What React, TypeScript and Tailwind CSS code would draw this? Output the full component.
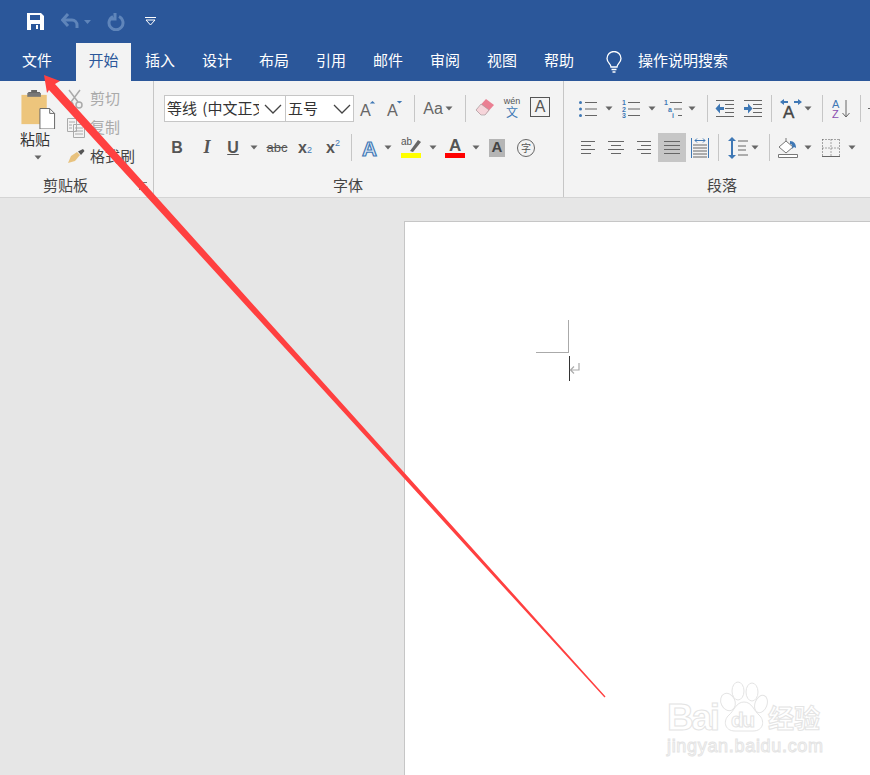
import type { ReactNode } from "react";

const cjk = "font-['Microsoft_YaHei','Noto_Sans_CJK_SC','Noto_Sans',sans-serif]";

const tabs = ["插入", "设计", "布局", "引用", "邮件", "审阅", "视图", "帮助"];

function Caret({ className = "" }: { className?: string }) {
  return (
    <div className={`flex w-[8px] shrink-0 justify-center ${className}`}>
      <svg width="8" height="5" viewBox="0 0 8 5">
        <path d="M.5 .5h7L4 4.500z" fill="#666" />
      </svg>
    </div>
  );
}

function Sep({ className = "" }: { className?: string }) {
  return <div className={`h-[27px] w-px shrink-0 bg-[#c6c6c6] ${className}`} />;
}

function Cell({ className = "", children }: { className?: string; children: ReactNode }) {
  return <div className={`flex shrink-0 items-center justify-center ${className}`}>{children}</div>;
}

function Chevron() {
  return (
    <svg width="18" height="10" viewBox="0 0 18 10" className="shrink-0">
      <path d="M1 1l8 8 8-8" fill="none" stroke="#444" strokeWidth="1.3" />
    </svg>
  );
}

function Lines({ w, rows }: { w: number; rows: [number, number][] }) {
  const h = rows.length * 4 + 1;
  return (
    <svg width={w} height={h} viewBox={`0 0 ${w} ${h}`}>
      {rows.map(([a, b], i) => (
        <path key={i} d={`M${a} ${i * 4 + 2.5}H${b}`} stroke="#666" strokeWidth="1" />
      ))}
    </svg>
  );
}

function ListIcon({ kind }: { kind: "bullet" | "num" | "multi" }) {
  const marks = kind === "num" ? ["1", "2", "3"] : ["1", "a", "i"];
  return (
    <svg width="20" height="18" viewBox="0 0 20 18">
      {[2.5, 9, 15.5].map((y, i) => {
        const x = kind === "multi" ? 1 + i * 4 : 1;
        return (
          <g key={y}>
            {kind === "bullet" ? (
              <circle cx="2.500" cy={y} r="1.500" fill="#3f78b5" />
            ) : (
              <text x={x} y={y + 2.5} fontSize="7" fontWeight="bold" fill="#3f78b5" fontFamily="Liberation Sans">
                {marks[i]}
              </text>
            )}
            <path d={`M${kind === "multi" ? x + 6 : 7} ${y}H19`} stroke="#666" strokeWidth="1" />
          </g>
        );
      })}
    </svg>
  );
}

function IndentIcon({ flip }: { flip?: boolean }) {
  return (
    <svg width="20" height="17" viewBox="0 0 20 17">
      <path d="M1 .5h18M10 4.500h9M10 8.500h9M10 12.500h9M1 16.500h18" stroke="#666" strokeWidth="1" />
      <path d={flip ? "M1 7h4V3.500l4.500 5L5 13.500V10H1z" : "M9 7H5V3.500L.5 8.500 5 13.500V10h4z"} fill="#3f78b5" />
    </svg>
  );
}

export default function App() {
  return (
    <div className={`relative flex h-[775px] w-[870px] flex-col overflow-hidden bg-[#e6e6e6] ${cjk}`}>
      {/* Title bar */}
      <div className="flex h-[43px] shrink-0 items-center bg-[#2b579a] pl-[27px]">
        <svg width="17" height="17" viewBox="0 0 17 17">
          <path d="M0 0h14l3 3v14H0z" fill="#fff" />
          <path d="M3 2h10v5H3z" fill="#2b579a" />
          <path d="M4 11h9v6H4z" fill="#2b579a" />
          <path d="M9 12h2v4H9z" fill="#fff" />
        </svg>
        <svg width="20" height="17" viewBox="0 0 20 17" className="ml-[17px]">
          <path d="M2 7h9a5 5 0 0 1 5 5v3" fill="none" stroke="#5f85ba" strokeWidth="3" />
          <path d="M7 1L1.500 7 7 13" fill="none" stroke="#5f85ba" strokeWidth="3" />
        </svg>
        <svg width="7" height="4" viewBox="0 0 7 4" className="ml-[3px]">
          <path d="M0 0h7L3.500 4z" fill="#5f85ba" />
        </svg>
        <svg width="18" height="18" viewBox="0 0 18 18" className="ml-[16px]">
          <path d="M6 3.500a7 7 0 1 0 6 0" fill="none" stroke="#5f85ba" strokeWidth="3" />
          <path d="M5 1v6h-5" fill="none" stroke="#5f85ba" strokeWidth="3" transform="translate(3 -1)" />
        </svg>
        <svg width="11" height="9" viewBox="0 0 11 9" className="ml-[20px]">
          <path d="M0 .5h11" stroke="#fff" />
          <path d="M1 3l4.500 5L10 3z" fill="none" stroke="#fff" />
        </svg>
      </div>

      {/* Tabs */}
      <div className="flex h-[38px] shrink-0 items-center bg-[#2b579a] text-[15px] text-white">
        <span className="-mt-[4px] ml-[22px] w-[54px]">文件</span>
        <div className="flex h-full w-[55px] items-center justify-center bg-[#f3f3f3] pb-[4px] text-[#2b579a]">开始</div>
        <div className="-mt-[4px] ml-[14px] flex gap-[27px]">
          {tabs.map((t) => (
            <span key={t} className="w-[30px] whitespace-nowrap">
              {t}
            </span>
          ))}
        </div>
        <svg width="18" height="22" viewBox="0 0 18 22" className="ml-[31px]">
          <path
            d="M6 16c0-3-4-4.500-4-8.500a7 7 0 0 1 14 0c0 4-4 5.500-4 8.500z"
            fill="none"
            stroke="#fff"
            strokeWidth="1.3"
          />
          <path d="M6.500 18.500h5M7.500 21h3" stroke="#fff" strokeWidth="1.3" />
        </svg>
        <span className="-mt-[4px] ml-[15px] whitespace-nowrap">操作说明搜索</span>
      </div>

      {/* Ribbon */}
      <div className="flex h-[117px] shrink-0 border-b border-[#d4d4d4] bg-[#f3f3f3] text-[#444]">
        {/* Clipboard */}
        <div className="flex w-[154px] shrink-0 flex-col border-r border-[#c6c6c6]">
          <div className="flex h-[94px]">
            <div className="flex w-[67px] shrink-0 flex-col items-center pl-[6px] pt-[9px]">
              <svg width="36" height="39" viewBox="0 0 36 40" className="ml-[3px]">
                <path d="M1 5h26v30H1z" fill="#edc57c" />
                <path d="M8 5h12V2h-3V0h-6v2H8z" fill="#666" />
                <path d="M7 3h14v4H7z" fill="#777" />
                <path d="M20 19h10l5 5v16H20z" fill="#fff" stroke="#666" />
                <path d="M30 19v5h5" fill="none" stroke="#666" />
              </svg>
              <span className="-ml-[3px] text-[15px] leading-[20px] text-[#333]">粘贴</span>
              <Caret className="ml-[2px] mt-[6px]" />
            </div>
            <div className="flex flex-col pt-[3px] text-[15px]">
              <div className="flex h-[29px] items-center text-[#aaa]">
                <svg width="18" height="20" viewBox="0 0 18 20" className="ml-[-1px] shrink-0">
                  <path d="M3 1l9 12M14 1L5 13" stroke="#aaa" strokeWidth="1.500" />
                  <circle cx="4" cy="16" r="3" fill="none" stroke="#aaa" strokeWidth="1.500" />
                  <circle cx="13" cy="16" r="3" fill="none" stroke="#aaa" strokeWidth="1.500" />
                </svg>
                <span className="ml-[6px]">剪切</span>
              </div>
              <div className="flex h-[29px] items-center text-[#aaa]">
                <svg width="18" height="20" viewBox="0 0 18 20" className="shrink-0">
                  <path d="M.5.500h9v13h-9zM6.500 6.500h11v13h-11z" fill="#f3f3f3" stroke="#aaa" />
                  <path d="M2 4h6M2 7h3M2 10h3M8 10h8M8 13h8M8 16h8" stroke="#aaa" />
                </svg>
                <span className="ml-[5px]">复制</span>
              </div>
              <div className="flex h-[29px] items-center text-[#444]">
                <svg width="18" height="16" viewBox="0 0 18 16" className="shrink-0">
                  <path d="M10 3l3 3-5 6-7 2 3-7z" fill="#e8c27e" />
                  <path d="M11 2.500L16 0l1.500 2L14 6z" fill="#555" />
                </svg>
                <span className="ml-[5px]">格式刷</span>
              </div>
            </div>
          </div>
          <div className="relative flex h-[21px] items-center pl-[43px] text-[15px]">
            剪贴板
            <svg width="9" height="9" viewBox="0 0 9 9" className="absolute left-[139px] top-[7px]">
              <path d="M.5 8V.5H8M3 3l5 5M8 4.500V8H4.500" fill="none" stroke="#777" />
            </svg>
          </div>
        </div>

        {/* Font */}
        <div className="flex w-[410px] shrink-0 flex-col border-r border-[#c6c6c6] pl-[10px]">
          <div className="mt-[14px] flex h-[27px] items-center">
            <div className="flex h-[27px] w-[122px] shrink-0 items-center overflow-hidden border border-[#c6c6c6] bg-white text-[15px] text-[#333]">
              <span className="ml-[2px] w-[92px] shrink-0 overflow-hidden whitespace-nowrap [word-spacing:2px]">等线 (中文正文)</span>
              <span className="w-[5px] shrink-0" />
              <Chevron />
            </div>
            <div className="-ml-px flex h-[27px] w-[69px] shrink-0 items-center border border-[#c6c6c6] bg-white text-[15px] text-[#333]">
              <span className="ml-[2px] w-[45px] shrink-0">五号</span>
              <Chevron />
            </div>
            <Cell className="ml-[5px] w-[18px]">
              <svg width="20" height="20" viewBox="0 0 20 20">
                <text x="1" y="18" fontSize="18" fill="#666" fontFamily="Liberation Sans">A</text>
                <path d="M12 4l3-3 3 3z" fill="#3f78b5" />
              </svg>
            </Cell>
            <Cell className="ml-[9px] w-[18px]">
              <svg width="20" height="20" viewBox="0 0 20 20">
                <text x="1" y="18" fontSize="18" fill="#666" fontFamily="Liberation Sans">A</text>
                <path d="M12 1l3 3 3-3z" fill="#3f78b5" />
              </svg>
            </Cell>
            <Sep className="ml-[10px]" />
            <Cell className="ml-[8px] w-[20px] text-[16px] text-[#666] font-['Liberation_Sans',sans-serif]">Aa</Cell>
            <Caret className="ml-[2px]" />
            <Sep className="ml-[12px]" />
            <Cell className="-mt-[3px] ml-[9px] w-[20px]">
              <svg width="20" height="20" viewBox="0 0 20 20">
                <path d="M1 13L11 2l8 6-9 10H6z" fill="#ea7f92" />
                <path d="M1 13l5-6 8 6-4 5H6z" fill="#f6d5da" stroke="#999" strokeWidth=".6" />
              </svg>
            </Cell>
            <Cell className="-mt-[2px] ml-[8px] w-[18px]">
              <div className="flex flex-col items-center leading-none">
                <span className="text-[9px] text-[#555] font-['Liberation_Sans',sans-serif]">wén</span>
                <span className="text-[12px] text-[#3f78b5]">文</span>
              </div>
            </Cell>
            <Cell className="-mt-[3px] ml-[9px] h-[20px] w-[20px] border border-[#555] text-[16px] text-[#555] font-['Liberation_Sans',sans-serif]">
              A
            </Cell>
          </div>
          <div className="mt-[11px] flex h-[29px] items-center font-['Liberation_Sans',sans-serif] text-[#555]">
            <Cell className="ml-[7px] w-[12px] text-[16px] font-bold">B</Cell>
            <Cell className="ml-[18px] w-[12px] font-['Liberation_Serif',serif] text-[18px] font-bold italic">I</Cell>
            <Cell className="ml-[14px] w-[12px] text-[16px] font-bold underline">U</Cell>
            <Caret className="ml-[11px]" />
            <Cell className="ml-[9px] w-[20px] text-[13px] line-through">abc</Cell>
            <Cell className="ml-[10px] w-[16px] text-[16px] font-bold">
              x<span className="mt-[6px] text-[9px] font-normal text-[#3f78b5]">2</span>
            </Cell>
            <Cell className="ml-[12px] w-[16px] text-[16px] font-bold">
              x<span className="-mt-[7px] text-[9px] font-normal text-[#3f78b5]">2</span>
            </Cell>
            <Sep className="ml-[10px]" />
            <Cell className="ml-[9px] w-[18px]">
              <svg width="20" height="22" viewBox="0 0 20 22">
                <text x="1" y="20" fontSize="23" fontWeight="bold" fill="#dce8f5" stroke="#3f78b5" strokeWidth="1.300" fontFamily="Liberation Sans">A</text>
              </svg>
            </Cell>
            <Caret className="ml-[5px]" />
            <Cell className="ml-[9px] w-[20px]">
              <svg width="20" height="22" viewBox="0 0 20 22">
                <text x="0" y="8" fontSize="10" fill="#555" fontFamily="Liberation Sans">ab</text>
                <path d="M9 14l8-11 3 2-8 10z" fill="#666" />
                <path d="M0 16h20v5H0z" fill="#ffff00" />
              </svg>
            </Cell>
            <Caret className="ml-[8px]" />
            <Cell className="ml-[8px] w-[20px]">
              <svg width="20" height="22" viewBox="0 0 20 22">
                <text x="4" y="14" fontSize="17" fontWeight="bold" fill="#555" fontFamily="Liberation Sans">A</text>
                <path d="M0 16h20v5H0z" fill="#f00" />
              </svg>
            </Cell>
            <Caret className="ml-[7px]" />
            <Cell className="ml-[9px] h-[18px] w-[16px] bg-[#b5b5b5] text-[15px] font-bold text-[#444]">A</Cell>
            <Cell className={`ml-[12px] h-[18px] w-[18px] rounded-full border border-[#666] text-[10px] text-[#555] ${cjk}`}>字</Cell>
          </div>
          <div className="mt-[13px] flex h-[21px] items-center pl-[169px] text-[15px]">字体</div>
        </div>

        {/* Paragraph */}
        <div className="flex min-w-0 flex-1 flex-col overflow-hidden pl-[10px]">
          <div className="mt-[14px] flex h-[27px] items-center">
            <Cell className="ml-[4px] w-[20px]"><ListIcon kind="bullet" /></Cell>
            <Caret className="ml-[7px]" />
            <Cell className="ml-[8px] w-[20px]"><ListIcon kind="num" /></Cell>
            <Caret className="ml-[7px]" />
            <Cell className="ml-[7px] w-[20px]"><ListIcon kind="multi" /></Cell>
            <Caret className="ml-[5px]" />
            <Sep className="ml-[11px]" />
            <Cell className="ml-[7px] w-[20px]"><IndentIcon /></Cell>
            <Cell className="ml-[8px] w-[20px]"><IndentIcon flip /></Cell>
            <Sep className="ml-[8px]" />
            <Cell className="ml-[7px] w-[24px]">
              <svg width="24" height="20" viewBox="0 0 24 20">
                <path d="M1 3l4-3v2h4v2H5v2zM23 3l-4-3v2h-4v2h4v2z" fill="#3f78b5" />
                <text x="4" y="19" fontSize="17" fill="#444" stroke="#444" strokeWidth=".4" fontFamily="Liberation Sans">A</text>
              </svg>
            </Cell>
            <Caret className="ml-[1px]" />
            <Sep className="ml-[10px]" />
            <Cell className="ml-[9px] w-[20px]">
              <svg width="20" height="20" viewBox="0 0 20 20">
                <text x="0" y="9" fontSize="11" fill="#3f78b5" fontFamily="Liberation Sans">A</text>
                <text x="0" y="19" fontSize="11" fill="#8a4fb0" fontFamily="Liberation Sans">Z</text>
                <path d="M14 1v17M10.500 14l3.500 4 3.500-4" fill="none" stroke="#666" />
              </svg>
            </Cell>
            <Sep className="ml-[8px]" />
            <div className="ml-[7px] h-px w-[3px] shrink-0 bg-[#666]" />
          </div>
          <div className="mt-[11px] flex h-[29px] items-center">
            <Cell className="ml-[6px] w-[16px]"><Lines w={16} rows={[[1, 15], [1, 11], [1, 15], [1, 11]]} /></Cell>
            <Cell className="ml-[12px] w-[16px]"><Lines w={16} rows={[[0, 16], [3, 13], [0, 16], [3, 13]]} /></Cell>
            <Cell className="ml-[12px] w-[16px]"><Lines w={16} rows={[[1, 15], [5, 15], [1, 15], [5, 15]]} /></Cell>
            <Cell className="ml-[6px] h-[29px] w-[28px] bg-[#c6c6c6]"><Lines w={16} rows={[[0, 16], [0, 16], [0, 16], [0, 16]]} /></Cell>
            <Cell className="ml-[5px] w-[18px]">
              <svg width="18" height="20" viewBox="0 0 18 20">
                <path d="M.5 0v20M17.500 0v20" stroke="#3f78b5" />
                <path d="M4 2.500h10M4 2.500l2-2M4 2.500l2 2M14 2.500l-2-2M14 2.500l-2 2" fill="none" stroke="#3f78b5" />
                <path d="M2 7h14M2 10h14M2 13h14M2 16h14M2 19h14" stroke="#666" />
              </svg>
            </Cell>
            <Sep className="ml-[9px]" />
            <Cell className="ml-[9px] w-[20px]">
              <svg width="20" height="22" viewBox="0 0 20 22">
                <path d="M4 0l4 4H5v14h3l-4 4-4-4h3V4H0z" fill="#3f78b5" />
                <path d="M10 4h10M10 9h8M10 13h8M10 18h10" stroke="#666" />
              </svg>
            </Cell>
            <Caret className="ml-[3px]" />
            <Sep className="ml-[10px]" />
            <Cell className="ml-[8px] w-[20px]">
              <svg width="20" height="20" viewBox="0 0 20 20">
                <path d="M1 9l7-6 7 6-7 6z" fill="#fff" stroke="#777" />
                <path d="M8 3V0" stroke="#777" />
                <path d="M12 3c4 0 6 3 6 7l-2-1-2 2c1-3 0-5-2-5z" fill="#3f78b5" />
                <path d="M.5 16.500h19v3H.5z" fill="#fff" stroke="#777" />
              </svg>
            </Cell>
            <Caret className="ml-[6px]" />
            <Cell className="ml-[10px] w-[18px]">
              <svg width="18" height="18" viewBox="0 0 18 18">
                <path d="M.5.500h17M.5 9h17M.5 .5v17M9 .5v17M17.500.5v17" fill="none" stroke="#555" strokeDasharray="1 2" />
                <path d="M0 17.500h18" stroke="#666" />
              </svg>
            </Cell>
            <Caret className="ml-[8px]" />
          </div>
          <div className="mt-[13px] flex h-[21px] items-center pl-[133px] text-[15px]">段落</div>
        </div>
      </div>

      {/* Document area */}
      <div className="min-h-0 flex-1 pl-[404px] pt-[23px]">
        <div className="h-full border-l border-t border-[#c6c6c6] bg-white pl-[131px] pt-[98px]">
          <div className="h-[33px] w-[33px] border-b border-r border-[#aaa]" />
          <div className="ml-[33px] mt-[3px] flex h-[25px] items-center">
            <div className="h-full w-px bg-[#333]" />
            <svg width="11" height="13" viewBox="0 0 11 13" className="-ml-px">
              <path d="M10 1v7H2M5 4.500L1.500 8 5 11.500" fill="none" stroke="#aaa" strokeWidth="1.200" />
            </svg>
          </div>
        </div>
      </div>

      {/* Annotation arrow */}
      <svg width="870" height="775" viewBox="0 0 870 775" className="absolute left-0 top-0">
        <path d="M44 75L60 81 55 84 605.500 696.500 604.500 697.500 49 90 47 93z" fill="#ff4040" />
      </svg>

      {/* Watermark */}
      <svg width="230" height="105" viewBox="0 0 230 105" className="absolute left-[640px] top-[670px]">
        <g fill="#fff" stroke="#e4e4e4" strokeWidth="1">
          <text x="27" y="60" fontSize="37" fontWeight="bold" fontFamily="Liberation Sans" textLength="53">Bai</text>
          <ellipse cx="88" cy="32" rx="7" ry="9" transform="rotate(-25 88 32)" />
          <ellipse cx="98" cy="21" rx="6" ry="9" />
          <ellipse cx="112" cy="22" rx="6" ry="9" />
          <ellipse cx="121" cy="34" rx="6" ry="9" transform="rotate(20 121 34)" />
          <path d="M104 32c8 0 10 9 15 13 6 5 5 16-6 16H95c-11 0-12-11-6-16 5-4 7-13 15-13z" />
          <text x="91" y="57" fontSize="21" fontWeight="bold" fontFamily="Liberation Sans" textLength="24">du</text>
          <text x="128" y="58" fontSize="26" fontWeight="bold" fontFamily="Noto Sans CJK SC">经验</text>
          <text x="27" y="82" fontSize="18" fontFamily="Liberation Sans" textLength="156">jingyan.baidu.com</text>
        </g>
      </svg>
    </div>
  );
}
